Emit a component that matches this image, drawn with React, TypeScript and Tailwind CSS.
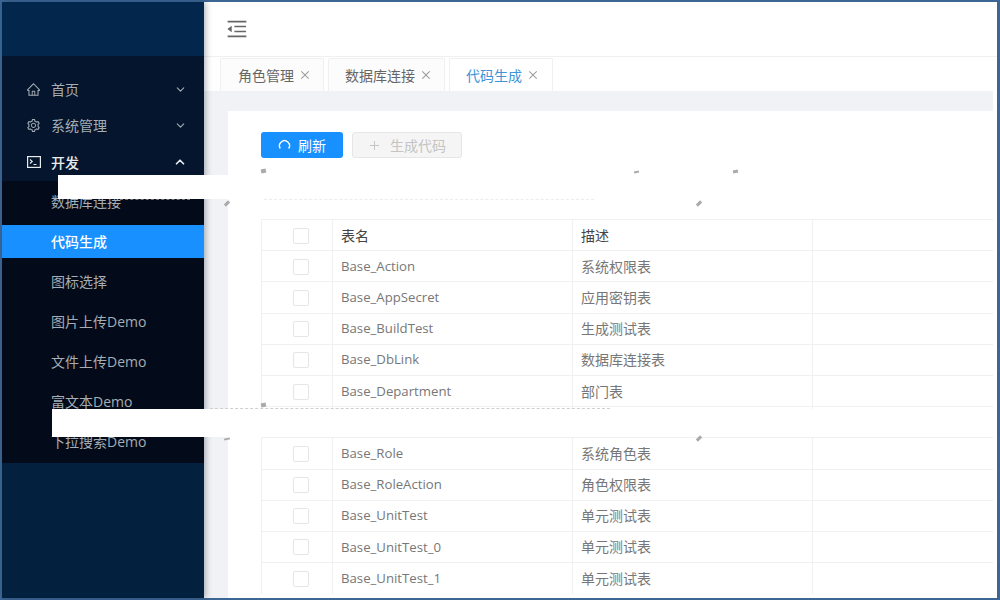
import { ChevronDown, ChevronUp } from 'lucide-react'
import { AiOutlineClose, AiOutlineHome, AiOutlineMenuFold, AiOutlinePlus, AiOutlineSetting } from 'react-icons/ai'

const subMenu = ['数据库连接', '代码生成', '图标选择', '图片上传Demo', '文件上传Demo', '富文本Demo', '下拉搜索Demo']

const tabs = [
  { title: '角色管理', active: false, box: 'w-[104px] pl-[17px]' },
  { title: '数据库连接', active: false, box: 'w-[117px] pl-[16px]' },
  { title: '代码生成', active: true, box: 'w-[104px] pl-[16px]' },
]

const rows = [
  ['Base_Action', '系统权限表'],
  ['Base_AppSecret', '应用密钥表'],
  ['Base_BuildTest', '生成测试表'],
  ['Base_DbLink', '数据库连接表'],
  ['Base_Department', '部门表'],
  ['', ''],
  ['Base_Role', '系统角色表'],
  ['Base_RoleAction', '角色权限表'],
  ['Base_UnitTest', '单元测试表'],
  ['Base_UnitTest_0', '单元测试表'],
  ['Base_UnitTest_1', '单元测试表'],
]

function Row({ name, desc, header }: { name: string; desc: string; header?: boolean }) {
  return (
    <div className={`grid grid-cols-[71px_240px_240px_1fr] h-[31.2px] border-b border-[#f0f0f0] last:border-b-0 ${header ? 'text-[#444]' : 'text-[#777]'}`}>
      <div className="flex items-center justify-center border-r border-[#f0f0f0] pl-[7px] pt-[1px]">
        <span className="block w-4 h-4 rounded-[2px] border border-[#e6e6e6] bg-white" />
      </div>
      <div className={`flex items-center pl-[8px] border-r border-[#f0f0f0] ${header ? 'text-[14px]' : 'pt-[1px]'}`}>{name}</div>
      <div className="flex items-center pl-[8px] border-r border-[#f0f0f0] text-[14px]">{desc}</div>
      <div />
    </div>
  )
}

export default function App() {
  return (
    <div className="relative w-[1000px] h-[600px] overflow-hidden bg-[#3c6694] pt-[2px] pl-[2px] pr-[3px] pb-[2px] font-['Open_Sans','Noto_Sans_CJK_SC',sans-serif] text-[13.2px]">
      <div className="flex h-full bg-white">
        {/* sidebar */}
        <aside className="w-[202px] shrink-0 flex flex-col bg-[#03203f] text-[#a6adb4] text-[14px] shadow-[2px_0_6px_rgba(0,21,41,0.3)] z-10">
          <div className="h-[54px] shrink-0 bg-[#02264c]" />
          <nav className="bg-[#04152d] pt-[15px]">
            <div className="h-[36px] flex items-center pl-[24px] pr-[17px]">
              <AiOutlineHome size={15} className="mr-[10px]" />
              <span className="flex-1">首页</span>
              <ChevronDown size={13} />
            </div>
            <div className="h-[36px] flex items-center pl-[24px] pr-[17px]">
              <AiOutlineSetting size={15} className="mr-[10px]" />
              <span className="flex-1">系统管理</span>
              <ChevronDown size={13} />
            </div>
            <div className="h-[38px] flex items-center pl-[25px] pr-[17px] text-[#e8eaec]">
              <svg width="14" height="12" viewBox="0 0 14 12" fill="none" stroke="currentColor" strokeWidth="1.2" className="mr-[10px]">
                <rect x="0.6" y="0.6" width="12.800" height="10.800" />
                <path d="M3 3.500l2.200 2-2.200 2M6.500 8.500h3" />
              </svg>
              <span className="flex-1 font-medium">开发</span>
              <ChevronUp size={14} strokeWidth={3} />
            </div>
          </nav>
          <ul className="bg-[#030b1a] pb-[2px]">
            {subMenu.map((item) => (
              <li key={item} className={`h-[40px] ${item === '代码生成' ? 'pt-[4px] pb-[3px] text-white font-medium' : ''}`}>
                <div className={`h-full flex items-center pl-[49px] ${item === '代码生成' ? 'bg-[#1890ff]' : ''}`}>{item}</div>
              </li>
            ))}
          </ul>
        </aside>

        <main className="flex-1 min-w-0 flex flex-col">
          <header className="h-[55px] shrink-0 flex items-center pl-[21px] border-b border-[#f0f0f0] text-[#666]">
            <AiOutlineMenuFold size={24} />
          </header>

          <div className="h-[34px] shrink-0 flex items-end pl-[16px] gap-[4px] text-[14px]">
            {tabs.map((t) => (
              <div
                key={t.title}
                className={`h-[33px] flex items-center gap-[5px] border border-b-0 border-[#f0f0f0] rounded-t-[2px] ${t.box} ${t.active ? 'bg-white text-[#3d94d6]' : 'bg-[#fcfcfc] text-[#666]'}`}
              >
                {t.title}
                <AiOutlineClose size={12} className="text-[#999]" />
              </div>
            ))}
          </div>

          <div className="flex-1 min-h-0 mr-[4px] bg-[#f0f2f5] pt-[20px] pl-[24px]">
            <div className="h-full bg-white pt-[21px] pl-[33px] overflow-hidden">
              <div className="flex gap-[9px] h-[26px] text-[14px]">
                <button className="w-[82px] flex items-center justify-center gap-[7px] rounded-[3px] bg-[#1890ff] text-white">
                  <svg width="13" height="13" viewBox="0 0 13 13" fill="none" stroke="white" strokeWidth="1.4">
                    <path d="M2.300 9.500A5 5 0 1 1 10.700 9.500" />
                  </svg>
                  刷新
                </button>
                <button className="w-[110px] flex items-center justify-center gap-[9px] rounded-[3px] border border-[#e6e6e6] bg-[#f5f5f5] text-[#c4c4c4]">
                  <AiOutlinePlus size={13} />
                  生成代码
                </button>
              </div>
              <div className="mt-[61px] border-t border-l border-[#f0f0f0]">
                <Row name="表名" desc="描述" header />
                {rows.map((r, i) => (
                  <Row key={i} name={r[0]} desc={r[1]} />
                ))}
              </div>
            </div>
          </div>
        </main>
      </div>

      {/* white bands lying over the page */}
      <div className="absolute z-20 left-[58px] top-[175px] w-[934px] h-[24px] bg-white" />
      <div className="absolute z-20 left-[52px] top-[409px] w-[945px] h-[28px] bg-white" />
      {/* watermark remnants */}
      <span className="absolute z-30 left-[261px] top-[169px] w-[5px] h-[4px] bg-[#aaa] -rotate-12" />
      <span className="absolute z-30 left-[224px] top-[202px] w-[6px] h-[3px] bg-[#aaa] -rotate-45" />
      <span className="absolute z-30 left-[696px] top-[202px] w-[6px] h-[3px] bg-[#aaa] -rotate-45" />
      <span className="absolute z-30 left-[634px] top-[171px] w-[5px] h-[2px] bg-[#aaa] -rotate-12" />
      <span className="absolute z-30 left-[733px] top-[170px] w-[5px] h-[3px] bg-[#aaa] -rotate-12" />
      <span className="absolute z-30 left-[261px] top-[403px] w-[5px] h-[4px] bg-[#aaa] -rotate-12" />
      <span className="absolute z-30 left-[224px] top-[438px] w-[6px] h-[2px] bg-[#aaa] -rotate-12" />
      <span className="absolute z-30 left-[696px] top-[437px] w-[6px] h-[3px] bg-[#aaa] -rotate-45" />
      <span className="absolute z-30 left-[210px] top-[408px] w-[400px] border-t border-dashed border-[#cfcfcf]" />
      <span className="absolute z-30 left-[120px] top-[199px] w-[70px] border-t border-dashed border-[#777]" />
      <span className="absolute z-30 left-[264px] top-[199px] w-[330px] border-t border-dashed border-[#ececec]" />
    </div>
  )
}
